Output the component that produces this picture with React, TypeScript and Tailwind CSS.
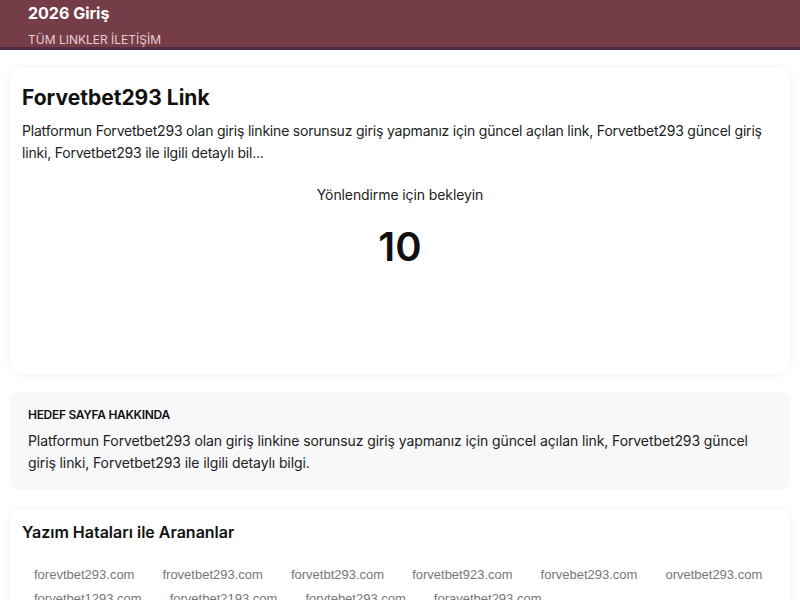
import React from 'react';

const typos = [
  'forevtbet293.com',
  'frovetbet293.com',
  'forvetbt293.com',
  'forvetbet923.com',
  'forvebet293.com',
  'orvetbet293.com',
  'forvetbet1293.com',
  'forvetbet2193.com',
  'forvtebet293.com',
  'foravetbet293.com',
];

const desc =
  'Platformun Forvetbet293 olan giriş linkine sorunsuz giriş yapmanız için güncel açılan link, Forvetbet293 güncel giriş linki, Forvetbet293 ile ilgili detaylı bilgi.';

export default function App() {
  return (
    <div className="min-h-screen bg-white text-[#111] font-['Inter','Noto_Sans',sans-serif] overflow-hidden h-[600px]">
      {/* header */}
      <header className="h-[50px] bg-[#743d48] border-b-[3px] border-[#512c44] px-7 flex flex-col">
        <div className="text-white text-base font-bold leading-6 mt-px">2026 Giriş</div>
        <nav className="text-[#e9cdd2] text-xs leading-4 mt-[7px]">TÜM LINKLER İLETİŞİM</nav>
      </header>

      <main className="px-[10px] pt-[18px] flex flex-col">
        {/* yönlendirme kartı */}
        <section className="rounded-xl bg-white shadow-[0_0_8px_rgba(0,0,0,0.06)] px-3 pt-4 h-[306px]">
          <h1 className="text-[21px] font-bold leading-7">Forvetbet293 Link</h1>
          <p className="mt-2 text-sm leading-[22px] text-[#222] tracking-[-0.2px]">
            Platformun Forvetbet293 olan giriş linkine sorunsuz giriş yapmanız için güncel açılan link, Forvetbet293 güncel giriş linki, Forvetbet293 ile ilgili detaylı bil...
          </p>
          <div className="mt-5 text-center text-sm leading-[22px] text-[#222] tracking-[-0.1px]">Yönlendirme için bekleyin</div>
          <div className="mt-[19px] text-center text-[40px] font-semibold leading-[44px]">10</div>
        </section>

        {/* hedef sayfa */}
        <section className="mt-[18px] rounded-lg bg-[#f8f8fa] px-[18px] pt-[15px] pb-[15px]">
          <h2 className="text-xs font-semibold leading-4 tracking-[-0.3px] text-[#111]">HEDEF SAYFA HAKKINDA</h2>
          <p className="mt-[7px] text-sm leading-[22px] text-[#222] tracking-[-0.1px]">{desc}</p>
        </section>

        {/* yazım hataları */}
        <section className="mt-[21px] rounded-xl bg-white shadow-[0_0_8px_rgba(0,0,0,0.06)] px-3 pt-[10px] pb-4">
          <h2 className="text-base font-semibold leading-6">Yazım Hataları ile Arananlar</h2>
          <ul className="mt-[19px] flex flex-wrap gap-x-1 font-['Liberation_Sans',Arial,sans-serif]">
            {typos.map((t) => (
              <li key={t} className="px-3 text-[13px] leading-6 text-[#777]">
                {t}
              </li>
            ))}
          </ul>
        </section>
      </main>
    </div>
  );
}
